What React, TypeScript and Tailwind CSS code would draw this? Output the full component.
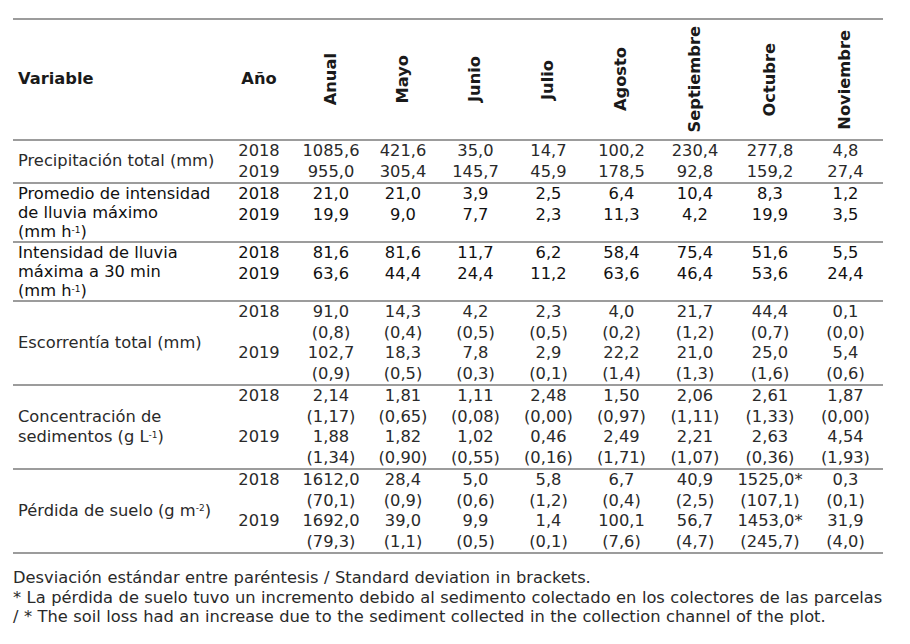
import React from "react";

type Group = {
  label: React.ReactNode;
  top?: boolean;
  dark?: boolean;
  years: string[];
  cols: string[][];
};

const months = ["Anual", "Mayo", "Junio", "Julio", "Agosto", "Septiembre", "Octubre", "Noviembre"];

const gridCols = "grid grid-cols-[210px_72px_72px_72px_73px_73px_73px_74px_76px_75px]";

// two years, value + (sd) for each
const withSd = (a: string[], b: string[]) => a.map((v, i) => [...v.split(" "), ...b[i].split(" ")]);

const groups: Group[] = [
  {
    label: "Precipitación total (mm)",
    years: ["2018", "2019"],
    cols: [
      ["1085,6", "955,0"],
      ["421,6", "305,4"],
      ["35,0", "145,7"],
      ["14,7", "45,9"],
      ["100,2", "178,5"],
      ["230,4", "92,8"],
      ["277,8", "159,2"],
      ["4,8", "27,4"],
    ],
  },
  {
    label: (
      <>
        Promedio de intensidad
        <br />
        de lluvia máximo
        <br />
        (mm h<sup className="text-[9px]">-1</sup>)
      </>
    ),
    top: true,
    dark: true,
    years: ["2018", "2019"],
    cols: [
      ["21,0", "19,9"],
      ["21,0", "9,0"],
      ["3,9", "7,7"],
      ["2,5", "2,3"],
      ["6,4", "11,3"],
      ["10,4", "4,2"],
      ["8,3", "19,9"],
      ["1,2", "3,5"],
    ],
  },
  {
    label: (
      <>
        Intensidad de lluvia
        <br />
        máxima a 30 min
        <br />
        (mm h<sup className="text-[9px]">-1</sup>)
      </>
    ),
    top: true,
    dark: true,
    years: ["2018", "2019"],
    cols: [
      ["81,6", "63,6"],
      ["81,6", "44,4"],
      ["11,7", "24,4"],
      ["6,2", "11,2"],
      ["58,4", "63,6"],
      ["75,4", "46,4"],
      ["51,6", "53,6"],
      ["5,5", "24,4"],
    ],
  },
  {
    label: "Escorrentía total (mm)",
    years: ["2018", "", "2019", ""],
    cols: withSd(
      ["91,0 (0,8)", "14,3 (0,4)", "4,2 (0,5)", "2,3 (0,5)", "4,0 (0,2)", "21,7 (1,2)", "44,4 (0,7)", "0,1 (0,0)"],
      ["102,7 (0,9)", "18,3 (0,5)", "7,8 (0,3)", "2,9 (0,1)", "22,2 (1,4)", "21,0 (1,3)", "25,0 (1,6)", "5,4 (0,6)"]
    ),
  },
  {
    label: (
      <>
        Concentración de
        <br />
        sedimentos (g L<sup className="text-[9px]">-1</sup>)
      </>
    ),
    years: ["2018", "", "2019", ""],
    cols: withSd(
      ["2,14 (1,17)", "1,81 (0,65)", "1,11 (0,08)", "2,48 (0,00)", "1,50 (0,97)", "2,06 (1,11)", "2,61 (1,33)", "1,87 (0,00)"],
      ["1,88 (1,34)", "1,82 (0,90)", "1,02 (0,55)", "0,46 (0,16)", "2,49 (1,71)", "2,21 (1,07)", "2,63 (0,36)", "4,54 (1,93)"]
    ),
  },
  {
    label: (
      <>
        Pérdida de suelo (g m<sup className="text-[9px]">-2</sup>)
      </>
    ),
    years: ["2018", "", "2019", ""],
    cols: withSd(
      ["1612,0 (70,1)", "28,4 (0,9)", "5,0 (0,6)", "5,8 (1,2)", "6,7 (0,4)", "40,9 (2,5)", "1525,0* (107,1)", "0,3 (0,1)"],
      ["1692,0 (79,3)", "39,0 (1,1)", "9,9 (0,5)", "1,4 (0,1)", "100,1 (7,6)", "56,7 (4,7)", "1453,0* (245,7)", "31,9 (4,0)"]
    ),
  },
];

function Lines({ items }: { items: string[] }) {
  return (
    <div className="flex flex-col items-center">
      {items.map((t, i) => (
        <div key={i} className="h-[20.5px] leading-[20.5px] whitespace-nowrap">
          {t || "\u00a0"}
        </div>
      ))}
    </div>
  );
}

export default function App() {
  return (
    <div className="min-h-screen bg-white pt-[18px] pl-[13px] text-[16.3px] text-[#2a2a2a] font-['DejaVu_Sans',sans-serif]">
      <div className="w-[870px]">
        {/* header */}
        <div className={`${gridCols} h-[123px] border-y-2 border-[#9c9c9c] font-bold text-[#1a1a1a]`}>
          <div className="flex items-center pl-[5px]">Variable</div>
          <div className="flex items-center justify-center">Año</div>
          {months.map((m) => (
            <div key={m} className="flex items-center justify-center">
              <span className="[writing-mode:vertical-rl] rotate-180 leading-none">{m}</span>
            </div>
          ))}
        </div>

        {groups.map((g, gi) => (
          <div
            key={gi}
            className={`${gridCols} border-b-2 border-[#9c9c9c] ${g.dark ? "text-[#111]" : ""}`}
          >
            <div className={`flex pl-[5px] ${g.top ? "items-start leading-[19px]" : "items-center leading-[20.5px]"}`}>
              <div className="whitespace-nowrap">{g.label}</div>
            </div>
            <Lines items={g.years} />
            {g.cols.map((c, ci) => (
              <Lines key={ci} items={c} />
            ))}
          </div>
        ))}
      </div>

      <div className="mt-[14px] w-[890px] leading-[19.5px] [word-spacing:0.3px]">
        <p>Desviación estándar entre paréntesis / Standard deviation in brackets.</p>
        <p>* La pérdida de suelo tuvo un incremento debido al sedimento colectado en los colectores de las parcelas</p>
        <p>/ * The soil loss had an increase due to the sediment collected in the collection channel of the plot.</p>
      </div>
    </div>
  );
}
